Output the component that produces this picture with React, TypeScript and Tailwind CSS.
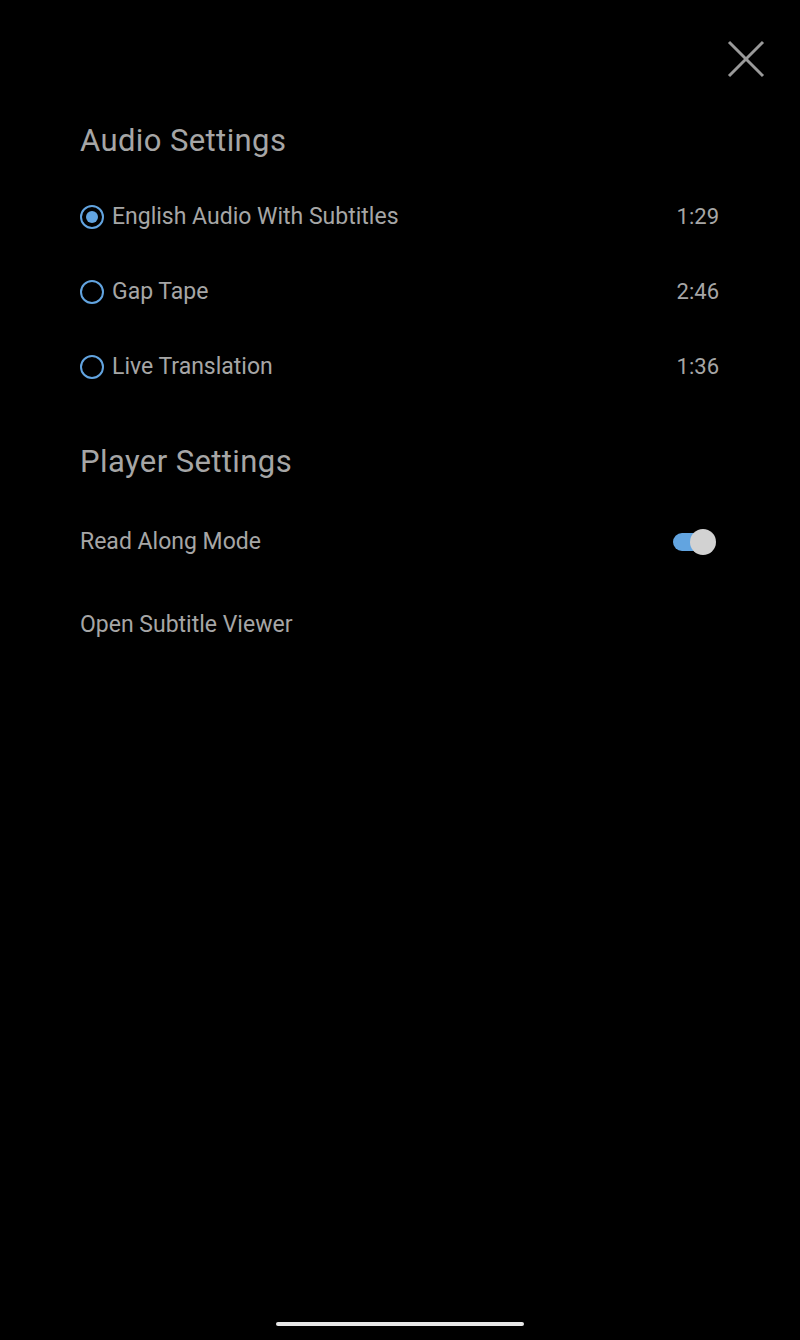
import { useState } from "react";

const tracks = [
  { name: "English Audio With Subtitles", time: "1:29" },
  { name: "Gap Tape", time: "2:46" },
  { name: "Live Translation", time: "1:36" },
];

function Radio({ on }: { on: boolean }) {
  return (
    <span className="w-[24px] h-[24px] rounded-full border-2 border-[#62a4e0] flex items-center justify-center shrink-0">
      {on && <span className="w-[12px] h-[12px] rounded-full bg-[#62a4e0]" />}
    </span>
  );
}

export default function App() {
  const [picked, setPicked] = useState(0);
  const [readAlong, setReadAlong] = useState(true);

  return (
    <div
      className="w-[800px] h-[1340px] bg-black flex flex-col text-[#a6a6a6]"
      style={{ fontFamily: "Roboto, 'Noto Sans', sans-serif" }}
    >
      <div className="flex justify-end pt-[40px] pr-[35px]">
        <button className="w-[38px] h-[38px] flex items-center justify-center">
          <svg width="38" height="38" viewBox="0 0 38 38" fill="none" stroke="#9a9a9a" strokeWidth="3">
            <path d="M2 2L36 36M36 2L2 36" />
          </svg>
        </button>
      </div>

      <div className="px-[80px]">
        <h2 className="mt-[45px] text-[31px] leading-[36px] tracking-[0.4px] font-normal">Audio Settings</h2>
        <div className="mt-[20px] flex flex-col">
          {tracks.map((t, i) => (
            <div
              key={t.name}
              onClick={() => setPicked(i)}
              className="h-[75px] flex items-center justify-between pr-[1px]"
            >
              <div className="flex items-center gap-[8px]">
                <Radio on={picked === i} />
                <span className="text-[23px] leading-none">{t.name}</span>
              </div>
              <span className="text-[22px] leading-none">{t.time}</span>
            </div>
          ))}
        </div>

        <h2 className="mt-[40px] text-[31px] leading-[36px] tracking-[0.4px] font-normal">Player Settings</h2>
        <div className="mt-[20px] flex flex-col">
          <div className="h-[83px] flex items-center justify-between">
            <span className="text-[23px] leading-none">Read Along Mode</span>
            <button
              onClick={() => setReadAlong(!readAlong)}
              className="relative w-[44px] h-[26px] mr-[4px] flex items-center"
            >
              <span className={`ml-[1px] w-[33px] h-[18px] rounded-full ${readAlong ? "bg-[#62a4e0]" : "bg-[#555]"}`} />
              <span
                className={`absolute top-0 w-[26px] h-[26px] rounded-full bg-[#d2d2d2] ${readAlong ? "left-[18px]" : "left-0"}`}
              />
            </button>
          </div>
          <div className="h-[83px] flex items-center">
            <span className="text-[23px] leading-none">Open Subtitle Viewer</span>
          </div>
        </div>
      </div>

      <div className="mt-auto pb-[14px] flex justify-center">
        <div className="w-[248px] h-[4px] rounded-full bg-[#e8e8e8]" />
      </div>
    </div>
  );
}
